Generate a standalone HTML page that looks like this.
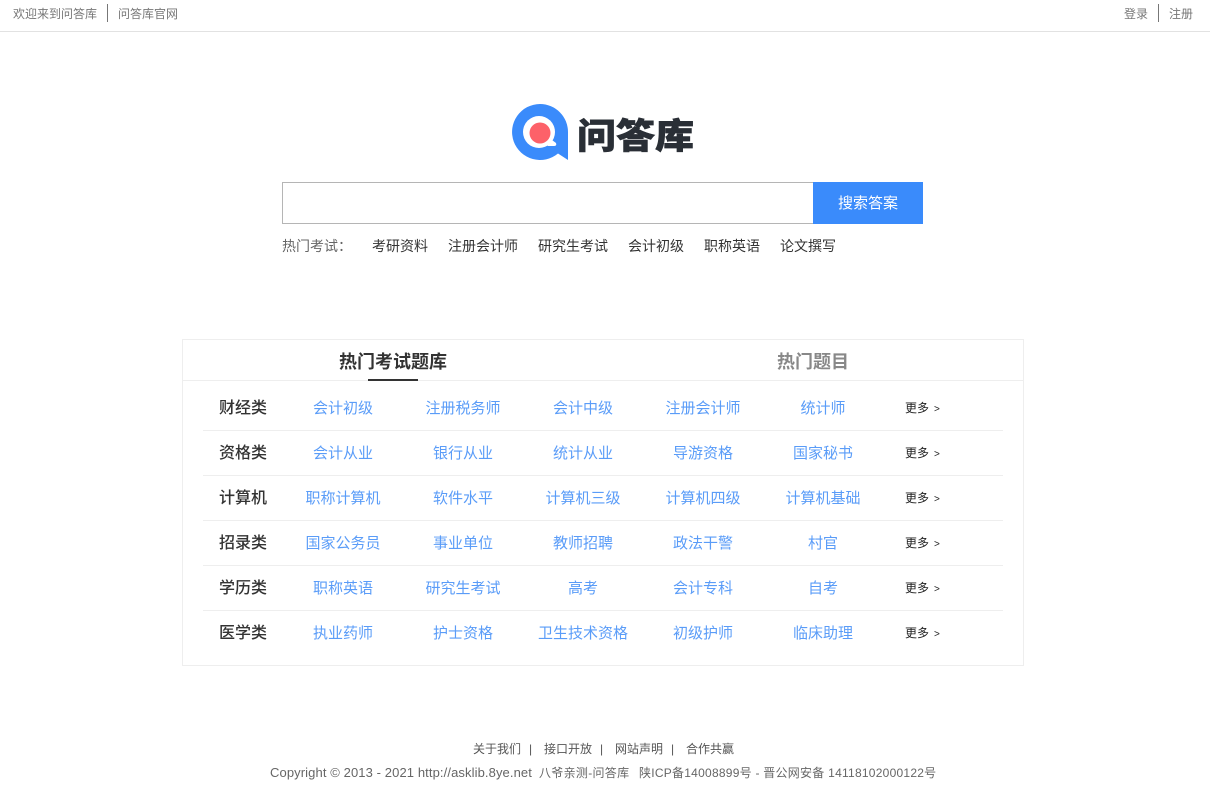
<!DOCTYPE html>
<html lang="zh">
<head>
<meta charset="utf-8">
<title>问答库</title>
<style>
*{margin:0;padding:0;box-sizing:border-box}
html,body{width:1210px;height:806px;overflow:hidden;background:#fff}
body{position:relative;font-family:"Liberation Sans","Noto Sans CJK SC",sans-serif;font-size:14px;color:#333}
.a{position:absolute;white-space:nowrap}
.c{position:absolute;white-space:nowrap;transform:translateX(-50%);line-height:20px}
.topbar{position:absolute;left:0;top:0;width:1210px;height:32px;border-bottom:1px solid #e2e2e2}
.top{font-size:12px;color:#777;line-height:16px;top:6px}
.sep{position:absolute;width:1px;height:18px;top:4px;background:#777}
.hot{font-size:14px;color:#333;line-height:20px;top:236px}
.card{position:absolute;left:182px;top:339px;width:842px;height:327px;border:1px solid #eee}
.hl{position:absolute;height:1px;background:#eee}
.lab{font-size:16px;font-weight:500;color:#333;transform:translateX(-50%);margin-top:1px}
.lk{font-size:15px;color:#5a9cf8;margin-top:1px}
.more{font-size:12px;color:#222;line-height:20px;left:905px}
.more i{font-style:normal;font-size:10px;margin-left:5px}
.ft{font-size:12px;color:#555;line-height:18px}
</style>
</head>
<body>
<div class="topbar"></div>
<div class="a top" style="left:13px">欢迎来到问答库</div>
<div class="sep" style="left:107px"></div>
<div class="a top" style="left:118px">问答库官网</div>
<div class="a top" style="left:1124px">登录</div>
<div class="sep" style="left:1158px"></div>
<div class="a top" style="left:1169px">注册</div>

<svg class="a" style="left:510px;top:102px" width="60" height="60" viewBox="0 0 60 60">
<path d="M30 2A28 28 0 1 0 48 51.500L58 58V30A28 28 0 0 0 30 2Z" fill="#3a8bfb"/>
<circle cx="29" cy="30" r="16" fill="#fff"/>
<path d="M38 35L46 41Q47 44 44 44H38L33 39Z" fill="#fff"/>
<circle cx="30" cy="31" r="10.500" fill="#fd6169"/>
</svg>
<div class="a" style="left:577px;top:107px;font-size:39px;line-height:54px;font-weight:900;color:#2a2f36;font-family:'Noto Sans CJK SC',sans-serif;-webkit-text-stroke:.7px #2a2f36;transform:scaleY(.9);transform-origin:50% 50%">问答库</div>

<div class="a" style="left:282px;top:182px;width:532px;height:42px;border:1px solid #b5b5b5;border-right:0"></div>
<div class="a" style="left:813px;top:182px;width:110px;height:42px;background:#3a8bfb;color:#fff;font-size:15px;line-height:43px;text-align:center">搜索答案</div>

<div class="a hot" style="left:282px;color:#666">热门考试：</div>
<div class="a hot" style="left:372px">考研资料</div>
<div class="a hot" style="left:448px">注册会计师</div>
<div class="a hot" style="left:538px">研究生考试</div>
<div class="a hot" style="left:628px">会计初级</div>
<div class="a hot" style="left:704px">职称英语</div>
<div class="a hot" style="left:780px">论文撰写</div>

<div class="card"></div>
<div class="hl" style="left:183px;top:380px;width:840px"></div>
<div class="c" style="left:393px;top:351px;font-size:18px;font-weight:700;line-height:22px;color:#333">热门考试题库</div>
<div class="a" style="left:368px;top:379px;width:50px;height:2px;background:#333"></div>
<div class="c" style="left:813px;top:351px;font-size:18px;font-weight:700;line-height:22px;color:#888">热门题目</div>

<div class="hl" style="left:203px;top:430px;width:800px"></div>
<div class="hl" style="left:203px;top:475px;width:800px"></div>
<div class="hl" style="left:203px;top:520px;width:800px"></div>
<div class="hl" style="left:203px;top:565px;width:800px"></div>
<div class="hl" style="left:203px;top:610px;width:800px"></div>

<div class="c lab" style="left:243px;top:398px">财经类</div>
<div class="c lk" style="left:343px;top:398px">会计初级</div>
<div class="c lk" style="left:463px;top:398px">注册税务师</div>
<div class="c lk" style="left:583px;top:398px">会计中级</div>
<div class="c lk" style="left:703px;top:398px">注册会计师</div>
<div class="c lk" style="left:823px;top:398px">统计师</div>
<div class="a more" style="top:398px">更多<i>&gt;</i></div>

<div class="c lab" style="left:243px;top:443px">资格类</div>
<div class="c lk" style="left:343px;top:443px">会计从业</div>
<div class="c lk" style="left:463px;top:443px">银行从业</div>
<div class="c lk" style="left:583px;top:443px">统计从业</div>
<div class="c lk" style="left:703px;top:443px">导游资格</div>
<div class="c lk" style="left:823px;top:443px">国家秘书</div>
<div class="a more" style="top:443px">更多<i>&gt;</i></div>

<div class="c lab" style="left:243px;top:488px">计算机</div>
<div class="c lk" style="left:343px;top:488px">职称计算机</div>
<div class="c lk" style="left:463px;top:488px">软件水平</div>
<div class="c lk" style="left:583px;top:488px">计算机三级</div>
<div class="c lk" style="left:703px;top:488px">计算机四级</div>
<div class="c lk" style="left:823px;top:488px">计算机基础</div>
<div class="a more" style="top:488px">更多<i>&gt;</i></div>

<div class="c lab" style="left:243px;top:533px">招录类</div>
<div class="c lk" style="left:343px;top:533px">国家公务员</div>
<div class="c lk" style="left:463px;top:533px">事业单位</div>
<div class="c lk" style="left:583px;top:533px">教师招聘</div>
<div class="c lk" style="left:703px;top:533px">政法干警</div>
<div class="c lk" style="left:823px;top:533px">村官</div>
<div class="a more" style="top:533px">更多<i>&gt;</i></div>

<div class="c lab" style="left:243px;top:578px">学历类</div>
<div class="c lk" style="left:343px;top:578px">职称英语</div>
<div class="c lk" style="left:463px;top:578px">研究生考试</div>
<div class="c lk" style="left:583px;top:578px">高考</div>
<div class="c lk" style="left:703px;top:578px">会计专科</div>
<div class="c lk" style="left:823px;top:578px">自考</div>
<div class="a more" style="top:578px">更多<i>&gt;</i></div>

<div class="c lab" style="left:243px;top:623px">医学类</div>
<div class="c lk" style="left:343px;top:623px">执业药师</div>
<div class="c lk" style="left:463px;top:623px">护士资格</div>
<div class="c lk" style="left:583px;top:623px">卫生技术资格</div>
<div class="c lk" style="left:703px;top:623px">初级护师</div>
<div class="c lk" style="left:823px;top:623px">临床助理</div>
<div class="a more" style="top:623px">更多<i>&gt;</i></div>

<div class="a ft" style="left:473px;top:740px">关于我们</div>
<div class="a ft" style="left:529px;top:740px">|</div>
<div class="a ft" style="left:544px;top:740px">接口开放</div>
<div class="a ft" style="left:600px;top:740px">|</div>
<div class="a ft" style="left:615px;top:740px">网站声明</div>
<div class="a ft" style="left:671px;top:740px">|</div>
<div class="a ft" style="left:686px;top:740px">合作共赢</div>
<div class="a ft" style="left:270px;top:764px;color:#666;font-size:13px;letter-spacing:.1px">Copyright © 2013 - 2021 http://asklib.8ye.net</div>
<div class="a ft" style="left:539px;top:764px;color:#666;letter-spacing:.3px">八爷亲测-问答库</div>
<div class="a ft" style="left:639px;top:764px;color:#666;letter-spacing:.25px">陕ICP备14008899号 - 晋公网安备 14118102000122号</div>
</body>
</html>
